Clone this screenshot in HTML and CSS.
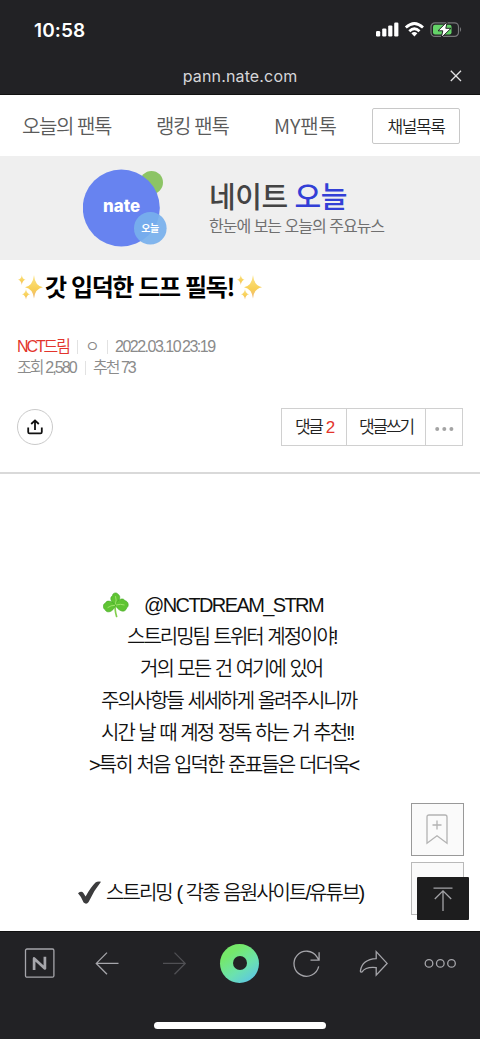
FILE: index.html
```html
<!DOCTYPE html>
<html lang="ko">
<head>
    <meta charset="UTF-8">
    <meta name="viewport" content="width=device-width, initial-scale=1.0">
    <title>갓 입덕한 드프 필독!</title>
    <link rel="stylesheet" href="styles.css">
</head>
<body>
    <svg class="defs" width="0" height="0">
        <defs>
            <linearGradient id="gold" x1="0" y1="0" x2="0" y2="1">
                <stop offset="0" stop-color="#fbe58c"/>
                <stop offset="0.6" stop-color="#f8cf55"/>
                <stop offset="1" stop-color="#eeb57c"/>
            </linearGradient>
            <symbol id="sparkles" viewBox="0 0 25 26">
                <path fill="url(#gold)" d="M16 1 Q17 12 25 13.2 Q17 14.5 16 24.5 Q14.8 14.5 7 13.2 Q14.8 12 16 1Z"/>
                <path fill="url(#gold)" d="M3.8 1 Q4.3 5 7.5 5.7 Q4.3 6.4 3.8 11 Q3.3 6.4 0 5.7 Q3.3 5 3.8 1Z"/>
                <path fill="url(#gold)" d="M8 15 Q8.5 19.5 12 20.3 Q8.5 21 8 25.5 Q7.4 21 4 20.3 Q7.4 19.5 8 15Z"/>
            </symbol>
        </defs>
    </svg>

    <div class="phone">
        <header class="browser-top">
            <div class="status-bar">
                <span class="time">10:58</span>
                <svg class="status-icons" width="87" height="18" viewBox="0 0 87 18">
                    <g fill="#fff">
                        <rect x="0" y="10" width="4.2" height="5.5" rx="1.2"/>
                        <rect x="6.2" y="7.4" width="4.2" height="8.1" rx="1.2"/>
                        <rect x="12.2" y="4.4" width="4.2" height="11.1" rx="1.2"/>
                        <rect x="18.2" y="1.6" width="4.2" height="13.9" rx="1.2"/>
                    </g>
                    <g fill="none" stroke="#fff" stroke-width="2.8">
                        <path d="M29.8 6.5 Q38.4 -1.6 47 6.5"/>
                        <path d="M33.3 10.2 Q38.4 5.4 43.5 10.2"/>
                    </g>
                    <path fill="#fff" d="M35.4 12.3 Q38.4 9.8 41.4 12.3 L38.4 15.4Z"/>
                    <rect x="55" y="1.8" width="27.5" height="13.6" rx="4" fill="none" stroke="#77777a" stroke-width="1.2"/>
                    <rect x="57" y="3.8" width="18.5" height="9.6" rx="2" fill="#64d368"/>
                    <path fill="#77777a" d="M84 6 Q86.3 8.5 84 11Z"/>
                    <path fill="#fff" stroke="#222225" stroke-width="1" d="M71.3 0.6 L62 9.8 H66.8 L65.2 16.8 L75 7.3 H69.8Z"/>
                </svg>
            </div>
            <div class="address-bar">
                <span class="url">pann.nate.com</span>
                <svg class="close" width="12" height="12" viewBox="0 0 12 12">
                    <path d="M0.8 0.8 L11 11 M11 0.8 L0.8 11" stroke="#e2e2e4" stroke-width="1.3" fill="none"/>
                </svg>
            </div>
        </header>

        <main class="page">
            <nav class="channel-nav">
                <a class="nav-today">오늘의 팬톡</a>
                <a class="nav-rank">랭킹 팬톡</a>
                <a class="nav-my">MY팬톡</a>
                <a class="channel-list">채널목록</a>
            </nav>

            <section class="banner">
                <svg class="banner-logo" width="86" height="80" viewBox="0 0 86 80">
                    <circle cx="68.5" cy="14.5" r="11.5" fill="#8cc465"/>
                    <circle cx="38.3" cy="40" r="38.5" fill="#6783f0"/>
                    <circle cx="67.3" cy="60.3" r="16.3" fill="#77b0ed" fill-opacity="0.92"/>
                    <text class="logo-nate" x="38.6" y="43.5" textLength="37" lengthAdjust="spacingAndGlyphs">nate</text>
                    <text class="logo-today" x="67" y="63.6">오늘</text>
                </svg>
                <div class="banner-text">
                    <p class="banner-title">네이트 <em>오늘</em></p>
                    <p class="banner-sub">한눈에 보는 오늘의 주요뉴스</p>
                </div>
            </section>

            <section class="post-head">
                <h1>
                    <svg width="25" height="26"><use href="#sparkles"/></svg>
                    <span>갓 입덕한 드프 필독!</span>
                    <svg width="25" height="26"><use href="#sparkles"/></svg>
                </h1>
                <div class="meta">
                    <span class="category">NCT드림</span><i></i><span class="writer">ㅇ</span><i></i><span class="date">2022.03.10 23:19</span>
                </div>
                <div class="meta">
                    <span class="views">조회 2,580</span><i></i><span class="likes">추천 73</span>
                </div>
                <div class="actions">
                    <a class="share">
                        <svg width="16" height="16" viewBox="0 0 16 16" fill="none" stroke="#111" stroke-width="1.8">
                            <path d="M1.2 8.5 V13 Q1.2 14.4 2.6 14.4 H13.4 Q14.8 14.4 14.8 13 V8.5"/>
                            <path d="M8 11 V1.8 M4.2 5 L8 1.4 L11.8 5"/>
                        </svg>
                    </a>
                    <div class="btn-group">
                        <a class="btn-reply">댓글 <b>2</b></a>
                        <a class="btn-write">댓글쓰기</a>
                        <a class="btn-more">
                            <svg width="19" height="4" viewBox="0 0 19 4" fill="#a4a4a4">
                                <circle cx="2.2" cy="2" r="2"/><circle cx="9.3" cy="2" r="2"/><circle cx="16.4" cy="2" r="2"/>
                            </svg>
                        </a>
                    </div>
                </div>
            </section>

            <article class="post-body">
                <p class="line account">
                    <svg width="26" height="26" viewBox="0 0 26 26">
                        <path d="M12.5 13 Q11.5 18 13.6 24.5" fill="none" stroke="#82cf4c" stroke-width="1.7" stroke-linecap="round"/>
                        <g fill="#5fc433" stroke="#43a624" stroke-width="0.6">
                            <path d="M12.4 13 C7.5 10.5 6.5 5 9.5 3.8 C9.5 .5 14 0 15.3 2.6 C18.5 4.5 16 10 12.4 13Z"/>
                            <path d="M12.4 13 C8.5 8.5 3.5 8 2.6 11 C-.5 12 -.3 16.5 2.2 17.8 C4 22 11 19.5 12.4 13Z"/>
                            <path d="M12.4 13 C14 7 20.5 5.2 22 8.8 C25.7 9.2 26.2 14.6 23.6 16 C22.6 21 15.5 20 12.4 13Z"/>
                        </g>
                        <path d="M12.4 12.6 Q13.8 8 12.5 4.2 M12 13.3 Q7.8 13.2 4.6 15.7 M13 13 Q17.5 11.6 21.5 13" fill="none" stroke="#a5e86f" stroke-width="0.9"/>
                    </svg>
                    <span>@NCTDREAM_STRM</span>
                </p>
                <p class="line l2">스트리밍팀 트위터 계정이야!</p>
                <p class="line l3">거의 모든 건 여기에 있어</p>
                <p class="line l4">주의사항들 세세하게 올려주시니까</p>
                <p class="line l5">시간 날 때 계정 정독 하는 거 추천!!</p>
                <p class="line l6">&gt;특히 처음 입덕한 준표들은 더더욱&lt;</p>
                <p class="line streaming">
                    <svg width="23" height="24" viewBox="0 0 23 24">
                        <path d="M0 12.2 Q3.5 9.5 5.4 12 L7.6 15.6 Q12.5 6.5 17.5 1.6 Q19.5 .2 23 .8 Q15.5 10 10.6 21 Q8.5 24 5.6 21.6 Q3.4 15.5 0 12.2Z" fill="#3b3b3d"/>
                    </svg>
                    <span>스트리밍 ( 각종 음원사이트/유튜브)</span>
                </p>
            </article>

            <div class="float-box">
                <svg width="22" height="31" viewBox="0 0 22 31" fill="none" stroke="#b3b3b3" stroke-width="1.3">
                    <path d="M1 29.3 V3 Q1 1 3 1 H19 Q21 1 21 3 V29.3 L11 21.8Z"/>
                    <path d="M11 6.5 V15.5 M6.5 11 H15.5"/>
                </svg>
            </div>
            <div class="float-box second"></div>
            <div class="to-top">
                <svg width="20" height="26" viewBox="0 0 20 26" fill="none" stroke="#a3a3a7" stroke-width="1.3">
                    <path d="M0.5 2.2 H19.5 M10 5 V25 M1.8 13 L10 4.8 L18.2 13"/>
                </svg>
            </div>
        </main>

        <footer class="browser-bottom">
            <div class="tools">
                <svg viewBox="0 0 40 40" class="tool">
                    <rect x="5.5" y="6" width="28.4" height="28.2" rx="1.5"/>
                    <path class="letter" d="M14.1 27 V15.4 L24.9 25.4 V13.8"/>
                </svg>
                <svg viewBox="0 0 40 40" class="tool">
                    <path d="M31.5 20.4 H9.5 M20 9.6 L9.3 20.4 L20 31.2"/>
                </svg>
                <svg viewBox="0 0 40 40" class="tool off">
                    <path d="M9 20.4 H31 M20.5 9.6 L31.2 20.4 L20.5 31.2"/>
                </svg>
                <div class="green-dot"></div>
                <svg viewBox="0 0 40 40" class="tool">
                    <path d="M32.7 23.4 A12.5 12.5 0 1 1 30.9 13.8 L33 17.2 M33.1 9.2 V17.2 H24.5"/>
                </svg>
                <svg viewBox="0 0 40 40" class="tool">
                    <path d="M23.2 8.6 L34.1 20.4 L23.2 32.2 V24.6 Q12.6 23.5 9.1 28.9 Q7.4 29.4 7.4 27.9 Q9.2 16.4 23.2 15.7Z"/>
                </svg>
                <svg viewBox="0 0 40 40" class="tool">
                    <circle cx="9" cy="20.4" r="3.8"/><circle cx="20.3" cy="20.4" r="3.8"/><circle cx="31.5" cy="20.4" r="3.8"/>
                </svg>
            </div>
            <div class="home-bar"></div>
        </footer>
    </div>
</body>
</html>
```
FILE: styles.css
```css
* {
    box-sizing: border-box;
}
body {
    margin: 0;
    background: #fff;
    font-family: "Liberation Sans", "Noto Sans CJK KR", sans-serif;
}
p, h1 {
    margin: 0;
    font-weight: normal;
}
svg {
    display: block;
    flex: none;
}
.defs {
    position: absolute;
}
.phone {
    display: flex;
    flex-direction: column;
    width: 480px;
    height: 1039px;
    overflow: hidden;
}

/* browser top */
.browser-top {
    height: 95px;
    flex: none;
    background: #222225;
    border-bottom: 1px solid #111;
    color: #fff;
    font-family: Inter, sans-serif;
}
.status-bar {
    display: flex;
    justify-content: space-between;
    align-items: center;
    height: 60px;
    padding: 0 17px 0 34px;
}
.time {
    font-size: 19px;
    font-weight: 600;
    letter-spacing: 0.1px;
}
.address-bar {
    display: grid;
    grid-template-columns: 1fr auto 1fr;
    align-items: center;
    height: 32px;
    padding: 0 18px;
}
.url {
    grid-column: 2;
    font-size: 16px;
    letter-spacing: 0.15px;
    color: #d6d6d9;
}
.close {
    justify-self: end;
}

/* page */
.page {
    position: relative;
    flex: 1;
    min-height: 0;
    overflow: hidden;
    background: #fff;
}
.channel-nav {
    display: flex;
    align-items: center;
    height: 61px;
    padding: 0 20px 0 22px;
    font-family: "Noto Sans CJK KR", sans-serif;
    font-weight: 350;
    font-size: 20px;
    line-height: 28px;
    color: #5a5a5a;
    white-space: nowrap;
}
.nav-today {
    width: 134px;
    letter-spacing: -1.45px;
}
.nav-rank {
    width: 118px;
    letter-spacing: -1.35px;
}
.nav-my {
    letter-spacing: -0.1px;
}
.channel-list {
    display: flex;
    justify-content: center;
    align-items: center;
    width: 88px;
    height: 36px;
    margin-left: auto;
    border: 1px solid #c8c8c8;
    border-radius: 2px;
    font-size: 17px;
    letter-spacing: -1.4px;
    color: #222;
}
.banner {
    display: flex;
    align-items: center;
    height: 104px;
    padding-left: 83px;
    background: #efefef;
}
.logo-nate {
    font: 800 17px Inter, sans-serif;
    fill: #fff;
    text-anchor: middle;
}
.logo-today {
    font: 700 10px "Noto Sans CJK KR", sans-serif;
    fill: #fff;
    text-anchor: middle;
    letter-spacing: -0.5px;
}
.banner-text {
    margin-left: 40px;
    font-family: "Noto Sans CJK KR", sans-serif;
    white-space: nowrap;
}
.banner-title {
    font-size: 29px;
    font-weight: 500;
    line-height: 32px;
    letter-spacing: -0.4px;
    word-spacing: -1px;
    color: #444;
}
.banner-title em {
    font-style: normal;
    color: #333fd6;
}
.banner-sub {
    padding-top: 2px;
    font-size: 16px;
    line-height: 24px;
    letter-spacing: -1px;
    color: #707070;
}

/* post head */
.post-head {
    height: 214px;
    padding: 13px 17px 0;
    border-bottom: 2px solid #d9d9d9;
}
.post-head h1 {
    display: flex;
    align-items: center;
    height: 28px;
    margin-bottom: 36px;
    padding-left: 1px;
    font-family: "Noto Sans CJK KR", sans-serif;
    font-size: 24px;
    font-weight: 700;
    line-height: 32px;
    letter-spacing: -1.4px;
    color: #000;
    white-space: nowrap;
}
.post-head h1 span {
    width: 194px;
    padding: 0 0 2px 2px;
}
.meta {
    display: flex;
    align-items: center;
    height: 20.5px;
    font-size: 16px;
    font-weight: 350;
    line-height: 20px;
    color: #8b8b8b;
    white-space: nowrap;
}
.meta i {
    width: 1px;
    height: 14px;
    margin: 0 8px 0 9px;
    background: #e2e2e2;
}
.category {
    width: 51px;
    letter-spacing: -2.1px;
    color: #e3342c;
}
.writer {
    width: 12px;
    margin-left: -1px;
    margin-right: 1px;
}
.date {
    margin-left: -1px;
    letter-spacing: -1.5px;
    word-spacing: -1px;
}
.views {
    width: 59px;
    letter-spacing: -1.9px;
}
.likes {
    margin-left: -1px;
    letter-spacing: -2px;
}
.actions {
    display: flex;
    justify-content: space-between;
    align-items: center;
    height: 38px;
    margin-top: 30px;
}
.share {
    display: flex;
    justify-content: center;
    align-items: center;
    width: 36px;
    height: 36px;
    border: 1px solid #cacaca;
    border-radius: 50%;
}
.btn-group {
    display: flex;
    height: 38px;
    border: 1px solid #d0d0d0;
    font-size: 17px;
    font-weight: 350;
    line-height: 24px;
    letter-spacing: -2.2px;
    color: #222;
    white-space: nowrap;
}
.btn-group a {
    display: flex;
    justify-content: center;
    align-items: center;
    padding-top: 1px;
}
.btn-group a + a {
    border-left: 1px solid #d0d0d0;
}
.btn-reply {
    width: 64px;
    gap: 4px;
}
.btn-reply b {
    font-weight: normal;
    color: #e3342c;
}
.btn-write {
    width: 79px;
}
.btn-group .btn-more {
    width: 37px;
    padding-top: 4px;
}

/* post body */
.post-body {
    padding-top: 115px;
}
.line {
    height: 32px;
    font-size: 20px;
    line-height: 32px;
    font-weight: 350;
    letter-spacing: -2px;
    word-spacing: 1px;
    color: #111;
    white-space: nowrap;
}
.account,
.streaming {
    display: flex;
    align-items: center;
}
.account {
    padding-left: 103px;
    gap: 15px;
    letter-spacing: -1.6px;
}
.account span {
    padding-bottom: 1px;
}
.l2 {
    padding-left: 127px;
}
.l3 {
    padding-left: 140px;
}
.l4 {
    padding-left: 101px;
}
.l5 {
    padding-left: 101px;
}
.l6 {
    padding-left: 89px;
    letter-spacing: -1.9px;
}
.streaming {
    margin-top: 96px;
    padding-left: 78px;
    gap: 5px;
    letter-spacing: -1.95px;
}

/* floating buttons */
.float-box {
    position: absolute;
    top: 708px;
    left: 411px;
    display: flex;
    justify-content: center;
    align-items: center;
    width: 53px;
    height: 53px;
    padding-right: 1px;
    border: 1px solid #999;
    background: #fafafa;
}
.second {
    top: 767px;
    border-color: #b9b9b9;
}
.to-top {
    position: absolute;
    top: 782px;
    left: 417px;
    display: flex;
    justify-content: center;
    align-items: center;
    width: 52px;
    height: 43px;
    border-radius: 1px;
    background: #1d1d1e;
}

/* browser bottom */
.browser-bottom {
    display: flex;
    flex-direction: column;
    justify-content: space-between;
    align-items: center;
    flex: none;
    height: 108px;
    padding: 11px 20px 10px;
    background: #222225;
    border-top: 1px solid #111;
}
.tools {
    display: flex;
    justify-content: space-between;
    align-items: center;
    width: 100%;
}
.tool {
    width: 40px;
    height: 40px;
    fill: none;
    stroke: #a6a6ab;
    stroke-width: 1.3;
}
.tool .letter {
    stroke-width: 2.7;
    stroke-linejoin: round;
}
.off {
    stroke: #505054;
}
.green-dot {
    display: flex;
    justify-content: center;
    align-items: center;
    width: 39px;
    height: 39px;
    border-radius: 50%;
    background: linear-gradient(145deg, #75e86a 25%, #6be2ae 60%, #58bdf5);
}
.green-dot::after {
    content: "";
    width: 14px;
    height: 14px;
    border-radius: 50%;
    background: #222225;
}
.home-bar {
    width: 172px;
    height: 7px;
    border-radius: 4px;
    background: #fff;
}
```
